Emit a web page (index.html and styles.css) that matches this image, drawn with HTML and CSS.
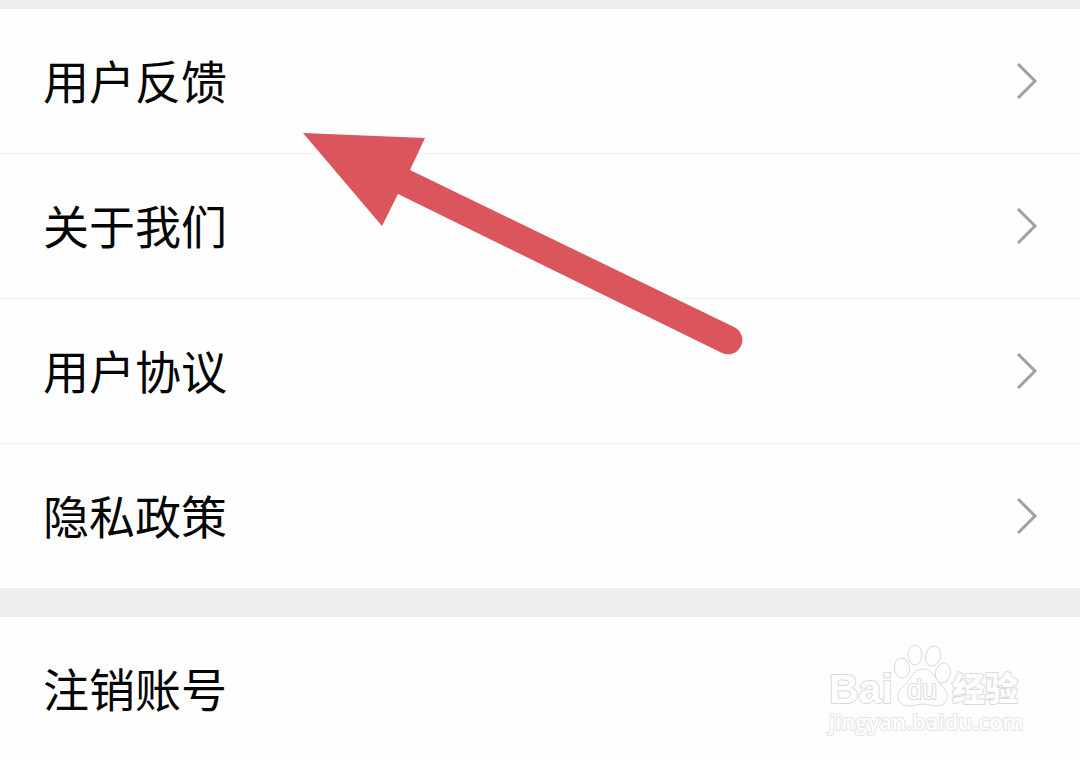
FILE: index.html
```html
<!DOCTYPE html>
<html lang="zh-CN">
<head>
<meta charset="utf-8">
<meta name="viewport" content="width=device-width, initial-scale=1">
<title>设置</title>
<link rel="stylesheet" href="styles.css">
</head>
<body>
<main class="settings">
  <nav class="group">
    <a class="row" href="#feedback"><span class="label">用户反馈</span><svg class="chevron" viewBox="0 0 24 38" aria-hidden="true"><path d="M3 2 20 19 3 36"/></svg></a>
    <a class="row" href="#about"><span class="label">关于我们</span><svg class="chevron" viewBox="0 0 24 38" aria-hidden="true"><path d="M3 2 20 19 3 36"/></svg></a>
    <a class="row" href="#agreement"><span class="label">用户协议</span><svg class="chevron" viewBox="0 0 24 38" aria-hidden="true"><path d="M3 2 20 19 3 36"/></svg></a>
    <a class="row" href="#privacy"><span class="label">隐私政策</span><svg class="chevron" viewBox="0 0 24 38" aria-hidden="true"><path d="M3 2 20 19 3 36"/></svg></a>
  </nav>
  <div class="group">
    <button class="row" type="button"><span class="label">注销账号</span></button>
  </div>
  <svg class="arrow" viewBox="0 0 440 224" aria-hidden="true"><path d="M0 1 122 6 107 38 431 195A14 14 0 0 1 419 221L95 62 79 94Z"/></svg>
  <svg class="watermark" viewBox="0 0 204 100" role="img" aria-label="Baidu 经验 jingyan.baidu.com">
    <text class="brand" x="4" y="63">Bai</text>
    <g class="paw">
      <ellipse cx="77" cy="28" rx="7.5" ry="10" transform="rotate(-8 77 28)"/>
      <ellipse cx="90" cy="15" rx="7" ry="10"/>
      <ellipse cx="108" cy="16" rx="7.5" ry="10" transform="rotate(14 108 16)"/>
      <ellipse cx="118" cy="33" rx="7.5" ry="10" transform="rotate(14 118 33)"/>
      <path d="M98 29C91 29 88 34 84 40C80 46 73 49 73 57C73 63 79 66 85 66C90 66 94 64 98 64C103 64 106 66 111 66C118 66 122 62 122 56C122 49 116 46 112 40C108 34 105 29 98 29Z"/>
    </g>
    <text class="du" x="82" y="59">du</text>
    <text class="cjk" x="127" y="61">经验</text>
    <text class="site" x="4" y="90">jingyan.baidu.com</text>
  </svg>
</main>
</body>
</html>
```
FILE: styles.css
```css
* {
  box-sizing: border-box;
}

body {
  margin: 0;
  background: #fefefe;
  color: #060606;
  font-family: "Noto Sans CJK SC", sans-serif;
}

.settings {
  position: relative;
}

.group {
  border-top: 29px solid #eee;
}

.group:first-child {
  border-top-width: 9px;
}

.row {
  display: flex;
  align-items: center;
  justify-content: space-between;
  width: 100%;
  height: 145px;
  padding: 0 41px 0 43px;
  border: 0;
  border-bottom: 1px solid #f0f0f0;
  background: none;
  color: inherit;
  font: inherit;
  text-decoration: none;
}

.row:last-child {
  height: 144px;
  border-bottom: 0;
}

.label {
  padding-bottom: 4px;
  font-size: 46px;
  line-height: 64px;
}

.chevron {
  width: 24px;
  height: 38px;
  fill: none;
  stroke: #a0a0a0;
  stroke-width: 3;
}

.arrow {
  position: absolute;
  top: 132px;
  left: 303px;
  width: 440px;
  height: 224px;
  fill: #da565c;
}

.watermark {
  position: absolute;
  right: 51px;
  bottom: 21px;
  width: 204px;
  height: 100px;
  fill: #fefefe;
  stroke: #dadada;
  stroke-width: 1;
  stroke-linejoin: round;
}

.watermark text {
  paint-order: stroke;
  stroke-width: 2;
}

.brand {
  font: bold 41px "Liberation Sans", Arial, sans-serif;
}

.du {
  font: 27px "Liberation Sans", Arial, sans-serif;
}

.cjk {
  font: 900 33px "Noto Sans CJK SC", sans-serif;
}

.watermark .site {
  font: 600 22px "Open Sans", "Noto Sans", sans-serif;
  stroke: #e4e4e4;
}
```
